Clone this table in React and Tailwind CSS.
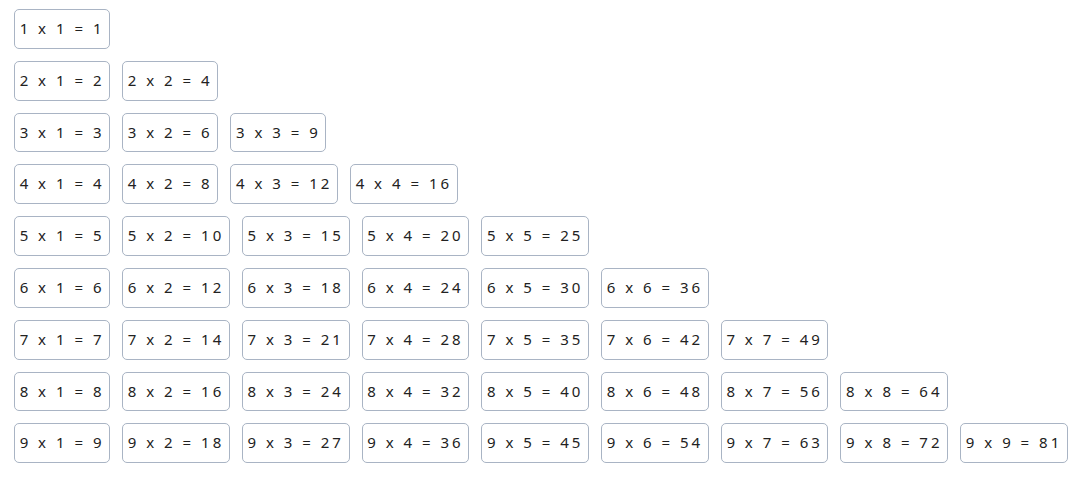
const ROWS = [1, 2, 3, 4, 5, 6, 7, 8, 9];

function Cell({ a, b }) {
  return (
    <div className="rounded-[5px] border border-[#a9b4c4] bg-white px-[4.65px] py-[9px] text-[15px] leading-[19.8px] tracking-[3px] text-[#222] whitespace-pre">
      {`${a} x ${b} = ${a * b}`}
    </div>
  );
}

export default function App() {
  return (
    <div
      className="flex flex-col gap-3 bg-white pl-[14px] pt-[9px] min-h-screen"
      style={{ fontFamily: '"Noto Sans", "Open Sans", sans-serif' }}
    >
      {ROWS.map((a) => (
        <div key={a} className="flex gap-3">
          {ROWS.filter((b) => b <= a).map((b) => (
            <Cell key={b} a={a} b={b} />
          ))}
        </div>
      ))}
    </div>
  );
}
